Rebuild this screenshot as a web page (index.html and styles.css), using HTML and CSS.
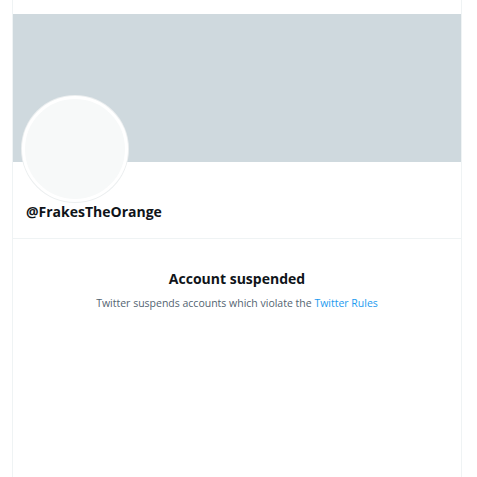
FILE: index.html
```html
<!DOCTYPE html>
<html>
<head>
<meta charset="utf-8">
<link rel="stylesheet" href="styles.css">
</head>
<body>
<div class="page">
  <main class="column">
    <div class="banner"></div>
    <section class="profile">
      <div class="avatar"></div>
      <div class="handle">@FrakesTheOrange</div>
    </section>
    <section class="notice">
      <h1 class="notice-title">Account suspended</h1>
      <p class="notice-text">Twitter suspends accounts which violate the <a class="link" href="#">Twitter Rules</a></p>
    </section>
  </main>
</div>
</body>
</html>
```
FILE: styles.css
```css
html, body {
  margin: 0;
  padding: 0;
  background: #ffffff;
}
body {
  font-family: "Open Sans", "Noto Sans", sans-serif;
  color: #0f1419;
}
.page {
  display: flex;
  padding-left: 12px;
  height: 477px;
  overflow: hidden;
}
.column {
  display: flex;
  flex-direction: column;
  width: 450px;
  box-sizing: border-box;
  border-left: 1px solid #eff3f4;
  border-right: 1px solid #eff3f4;
  padding-top: 14px;
  height: 477px;
  background: #fff;
}
.banner {
  height: 148px;
  flex: none;
  background: #cfd9de;
}
.profile {
  display: flex;
  flex-direction: column;
  align-items: flex-start;
  padding: 0 0 16px 13px;
  border-bottom: 1px solid #eff3f4;
}
.avatar {
  width: 100px;
  height: 100px;
  margin-top: -66px;
  margin-left: -4px;
  border: 3px solid #ffffff;
  border-radius: 50%;
  background: #f7f9f9;
  box-shadow: 0 0 0 1px #eceff0;
}
.handle {
  font-size: 14px;
  font-weight: 700;
  line-height: 20px;
  color: #0f1419;
}
.notice {
  display: flex;
  flex-direction: column;
  align-items: center;
  padding-top: 30px;
}
.notice-title {
  margin: 0;
  font-size: 14px;
  font-weight: 700;
  line-height: 20px;
  color: #0f1419;
}
.notice-text {
  margin: 6px 0 0;
  font-size: 10.5px;
  line-height: 16px;
  color: #536471;
}
.link {
  color: #1d9bf0;
  text-decoration: none;
}
```
